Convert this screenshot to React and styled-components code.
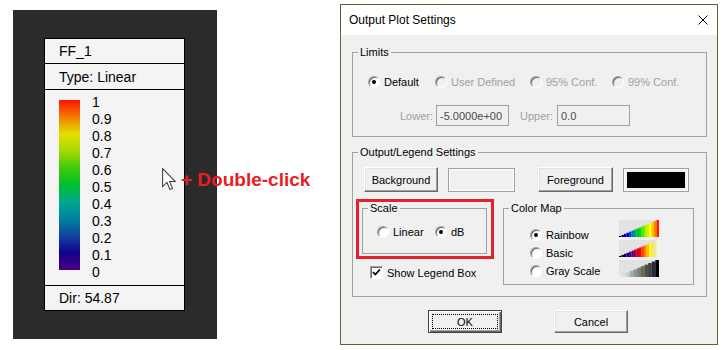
import React from 'react';
import styled, { createGlobalStyle } from 'styled-components';

const Global = createGlobalStyle`
  html, body {
    margin: 0;
    background: #fff;
  }
  body {
    font-family: "Liberation Sans", Arial, sans-serif;
    color: #000;
  }
`;

const Page = styled.div`
  display: flex;
  align-items: flex-start;
  width: 724px;
  height: 350px;
  overflow: hidden;
`;

/* ---------- left: legend preview ---------- */

const Viewport = styled.div`
  position: relative;
  box-sizing: border-box;
  width: 204px;
  height: 329px;
  margin: 10px 0 0 13px;
  padding: 28px 0 0 31px;
  background: #2b2b2b;
`;

const LegendBox = styled.div`
  box-sizing: border-box;
  width: 141px;
  border: 1px solid #000;
  background: #f4f4f4;
  font-size: 14px;
`;

const LegendRow = styled.div`
  box-sizing: border-box;
  display: flex;
  align-items: ${p => (p.$top ? 'flex-start' : 'center')};
  height: ${p => p.$h}px;
  padding-left: 14px;
  border-bottom: ${p => (p.$last ? 'none' : '1px solid #000')};
`;

const ColorBar = styled.div`
  width: 21px;
  height: 170px;
  margin-top: 10px;
  background: linear-gradient(
    to bottom,
    #ff1400 0%,
    #f27c00 10%,
    #e4e000 20%,
    #a6d800 30%,
    #3ccb08 40%,
    #00c030 50%,
    #00a88c 60%,
    #0082a2 70%,
    #10449c 80%,
    #12008c 90%,
    #4a0080 100%
  );
`;

const Ticks = styled.div`
  margin: 4px 0 0 12px;
  line-height: 17px;
`;

const Annotation = styled.div`
  position: absolute;
  left: 149px;
  top: 158px;
  display: flex;
  align-items: flex-start;
  gap: 5px;
  white-space: nowrap;
`;

const AnnotationText = styled.span`
  margin-top: 1px;
  font-size: 19px;
  font-weight: 700;
  color: #ea1c24;
`;

/* ---------- right: dialog ---------- */

const Dialog = styled.div`
  box-sizing: border-box;
  width: 378px;
  margin: 4px 0 0 123px;
  border: 1px solid #5b6435;
  background: #f0f0f0;
`;

const TitleBar = styled.div`
  display: flex;
  align-items: center;
  justify-content: space-between;
  height: 30px;
  padding: 0 9px 0 8px;
  background: #fff;
  font-size: 12px;
`;

const Body = styled.div`
  padding: 11px 10px 11px 11px;
  font-size: 11px;
`;

const Group = styled.fieldset`
  margin: ${p => p.$mt || 0}px 0 0;
  padding: 0;
  min-width: 0;
  width: ${p => (p.$w ? `${p.$w}px` : 'auto')};
  box-sizing: border-box;
  border: 1px solid #a0a0a0;
`;

const Caption = styled.legend`
  margin-left: 5px;
  padding: 0 2px;
  line-height: 13px;
  font-size: 11px;
`;

const GroupInner = styled.div`
  padding: ${p => p.$pad};
`;

const Row = styled.div`
  display: flex;
  align-items: center;
  height: ${p => p.$h}px;
  margin: ${p => p.$m || 0};
`;

const Option = styled.label`
  display: flex;
  align-items: center;
  gap: 4px;
  width: ${p => (p.$w ? `${p.$w}px` : 'auto')};
  height: ${p => p.$h || 16}px;
  color: ${p => (p.$disabled ? '#a0a0a0' : '#000')};
  white-space: nowrap;
`;

const RadioDot = styled.span`
  position: relative;
  flex: none;
  box-sizing: border-box;
  width: 12px;
  height: 12px;
  border-radius: 50%;
  border: 1px solid;
  border-color: #a0a0a0 #fff #fff #a0a0a0;
  box-shadow: inset 1px 1px 0 #696969;
  background: ${p => (p.$disabled ? '#f0f0f0' : '#fff')};

  &::after {
    content: '';
    display: ${p => (p.$checked ? 'block' : 'none')};
    position: absolute;
    left: 3px;
    top: 3px;
    width: 4px;
    height: 4px;
    border-radius: 50%;
    background: #000;
  }
`;

const CheckBox = styled.span`
  flex: none;
  display: flex;
  box-sizing: border-box;
  width: 13px;
  height: 13px;
  border: 1px solid;
  border-color: #a0a0a0 #fff #fff #a0a0a0;
  box-shadow: inset 1px 1px 0 #696969;
  background: #fff;
`;

const FieldLabel = styled.span`
  width: ${p => p.$w}px;
  margin-left: ${p => p.$ml || 0}px;
  color: #a0a0a0;
`;

const Field = styled.div`
  box-sizing: border-box;
  display: flex;
  align-items: center;
  width: 73px;
  height: 21px;
  padding-left: 3px;
  border: 1px solid #a0a0a0;
  background: #f0f0f0;
  color: #4a4a4a;
`;

const Button = styled.button`
  box-sizing: border-box;
  display: flex;
  align-items: stretch;
  justify-content: center;
  width: ${p => p.$w}px;
  height: ${p => p.$h}px;
  margin-left: ${p => p.$ml || 0}px;
  padding: ${p => (p.$default ? '3px' : '0')};
  font: 11px "Liberation Sans", Arial, sans-serif;
  color: #000;
  background: #f0f0f0;
  border: 1px solid;
  border-color: ${p => (p.$default ? '#404040' : '#fff #696969 #696969 #fff')};
  box-shadow: ${p =>
    p.$default
      ? 'inset 1px 1px 0 #fff, inset -1px -1px 0 #696969, inset -2px -2px 0 #a0a0a0'
      : 'inset -1px -1px 0 #a0a0a0, inset 1px 1px 0 #e3e3e3'};
`;

const ButtonFace = styled.span`
  flex: 1;
  display: flex;
  align-items: center;
  justify-content: center;
  border: 1px dotted ${p => (p.$focus ? '#000' : 'transparent')};
`;

const ColorWell = styled.div`
  box-sizing: border-box;
  width: ${p => p.$w}px;
  height: 24px;
  margin-left: 10px;
  padding: 3px;
  border: 1px solid #a0a0a0;
  box-shadow: inset 0 0 0 1px #fff;
  background: #f0f0f0;

  &::before {
    content: '';
    display: block;
    height: 100%;
    background: ${p => p.$color};
  }
`;

const Split = styled.div`
  display: flex;
  align-items: flex-start;
  gap: 9px;
  margin-top: 7px;
`;

const Highlight = styled.div`
  box-sizing: border-box;
  width: 138px;
  padding: 0 4px 2px 3px;
  border: 3px solid #e8202a;
`;

const MapInner = styled.div`
  display: flex;
  align-items: flex-start;
  padding: 5px 0 4px 26px;
`;

const RadioCol = styled.div`
  display: flex;
  flex-direction: column;
  width: 89px;
  margin-top: 6px;
`;

const RampCol = styled.div`
  display: flex;
  flex-direction: column;
  gap: 3px;
`;

const Footer = styled.div`
  display: flex;
  justify-content: center;
  gap: 52px;
  margin-top: 13px;
  padding-right: 3px;
`;

const RAINBOW = ['#000000', '#00006a', '#0000b0', '#0000f0', '#0040e0', '#0080b0', '#00a070', '#00c030',
  '#00e000', '#40f000', '#90f000', '#d0f000', '#ffff00', '#ffc000', '#ff8000', '#ff2000'];
const BASIC = ['#000000', '#000040', '#000080', '#200080', '#400080', '#700070', '#a00040', '#d00020',
  '#ff0000', '#ff4000', '#ff8000', '#ffc000', '#ffff00', '#f0e868', '#ece8a0', '#f8f4d8'];
const GRAY = ['#e8f0ec', '#d0e4dc', '#b8d0c8', '#a8a8a8', '#909090', '#7c7c84', '#6a6a50',
  '#505040', '#404048', '#282838', '#000000'];

const Ramp = ({ colors }) => {
  const w = 40 / colors.length;
  return (
    <svg width="40" height="17" viewBox="0 0 40 17" style={{ display: 'block' }}>
      <rect width="40" height="17" fill="#e2e2e2" />
      {colors.map((c, i) => {
        const h = (17 * (i + 1)) / colors.length;
        return <rect key={i} x={i * w} y={17 - h} width={w + 0.1} height={h} fill={c} />;
      })}
    </svg>
  );
};

const Radio = ({ label, checked, disabled, w, h }) => (
  <Option $w={w} $h={h} $disabled={disabled}>
    <RadioDot $checked={checked} $disabled={disabled} />
    {label}
  </Option>
);

const Cursor = () => (
  <svg width="14" height="22" viewBox="0 0 12 19">
    <path d="M0.5 0.5 V16 L4.2 12.4 L6.8 18.5 L9 17.6 L6.5 11.7 H11.5 Z"
      fill="#fff" stroke="#3a3a3a" strokeWidth="0.9" strokeLinejoin="miter" />
  </svg>
);

const TICKS = ['1', '0.9', '0.8', '0.7', '0.6', '0.5', '0.4', '0.3', '0.2', '0.1', '0'];

const App = () => (
  <Page>
    <Global />
    <Viewport>
      <LegendBox>
        <LegendRow $h={25}>FF_1</LegendRow>
        <LegendRow $h={26}>Type: Linear</LegendRow>
        <LegendRow $h={196} $top>
          <ColorBar />
          <Ticks>
            {TICKS.map(t => <div key={t}>{t}</div>)}
          </Ticks>
        </LegendRow>
        <LegendRow $h={24} $last>Dir: 54.87</LegendRow>
      </LegendBox>
      <Annotation>
        <Cursor />
        <AnnotationText>+ Double-click</AnnotationText>
      </Annotation>
    </Viewport>

    <Dialog>
      <TitleBar>
        <span>Output Plot Settings</span>
        <svg width="10" height="10" viewBox="0 0 10 10">
          <path d="M0.5 0.5 L9.5 9.5 M9.5 0.5 L0.5 9.5" stroke="#000" strokeWidth="1" />
        </svg>
      </TitleBar>
      <Body>
        <Group>
          <Caption>Limits</Caption>
          <GroupInner $pad="15px 0 10px 15px">
            <Row $h={16}>
              <Radio label="Default" checked w={67} />
              <Radio label="User Defined" disabled w={95} />
              <Radio label="95% Conf." disabled w={82} />
              <Radio label="99% Conf." disabled />
            </Row>
            <Row $h={21} $m="15px 0 0 32px">
              <FieldLabel $w={36}>Lower:</FieldLabel>
              <Field>-5.0000e+00</Field>
              <FieldLabel $w={37} $ml={11}>Upper:</FieldLabel>
              <Field>0.0</Field>
            </Row>
          </GroupInner>
        </Group>

        <Group $mt={9}>
          <Caption>Output/Legend Settings</Caption>
          <GroupInner $pad="8px 12px 11px 3px">
            <Row $h={25} $m="0 0 0 8px">
              <Button $w={74} $h={25}><ButtonFace>Background</ButtonFace></Button>
              <ColorWell $w={67} $color="#f0f0f0" />
              <Button $w={75} $h={25} $ml={23}><ButtonFace>Foreground</ButtonFace></Button>
              <ColorWell $w={66} $color="#000" />
            </Row>
            <Split>
              <div>
                <Highlight>
                  <Group>
                    <Caption>Scale</Caption>
                    <GroupInner $pad="9px 0 13px 14px">
                      <Row $h={16}>
                        <Radio label="Linear" w={58} />
                        <Radio label="dB" checked />
                      </Row>
                    </GroupInner>
                  </Group>
                </Highlight>
                <Row $h={13} $m="7px 0 0 14px">
                  <Option $h={13}>
                    <CheckBox>
                      <svg width="11" height="11" viewBox="0 0 11 11">
                        <path d="M2 5 L4.3 7.5 L9 2.5" fill="none" stroke="#000" strokeWidth="1.8" />
                      </svg>
                    </CheckBox>
                    Show Legend Box
                  </Option>
                </Row>
              </div>
              <Group $w={191} $mt={3}>
                <Caption>Color Map</Caption>
                <MapInner>
                  <RadioCol>
                    <Radio label="Rainbow" checked h={18} />
                    <Radio label="Basic" h={18} />
                    <Radio label="Gray Scale" h={18} />
                  </RadioCol>
                  <RampCol>
                    <Ramp colors={RAINBOW} />
                    <Ramp colors={BASIC} />
                    <Ramp colors={GRAY} />
                  </RampCol>
                </MapInner>
              </Group>
            </Split>
          </GroupInner>
        </Group>

        <Footer>
          <Button $w={74} $h={23} $default><ButtonFace $focus>OK</ButtonFace></Button>
          <Button $w={74} $h={23}><ButtonFace>Cancel</ButtonFace></Button>
        </Footer>
      </Body>
    </Dialog>
  </Page>
);

export default App;
